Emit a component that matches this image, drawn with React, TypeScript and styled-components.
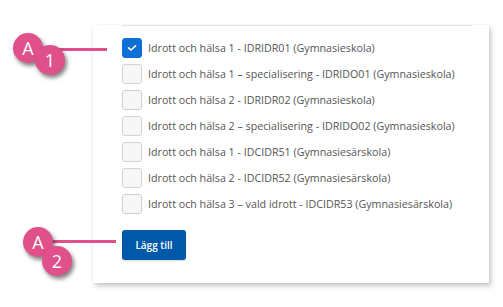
import React from "react";
import styled, { createGlobalStyle } from "styled-components";

const Global = createGlobalStyle`
  html, body { margin: 0; padding: 0; background: #ffffff; }
  body { font-family: "Open Sans", "Noto Sans", sans-serif; }
`;

const Stage = styled.div`
  position: relative;
  width: 503px;
  height: 307px;
  overflow: hidden;
  padding: 25px 0 0 93px;
  box-sizing: border-box;
`;

const Panel = styled.div`
  width: 396px;
  height: 258px;
  box-sizing: border-box;
  background: #fff;
  box-shadow: 2px 3px 5px rgba(0, 0, 0, 0.22), 0 0 2px rgba(0, 0, 0, 0.06);
  padding: 0 17px 23px 29px;
  display: flex;
  flex-direction: column;
`;

const TopRule = styled.div`
  height: 1px;
  background: #e6e6e6;
  margin-bottom: 12px;
`;

const List = styled.div`
  display: flex;
  flex-direction: column;
  gap: 6px;
`;

const Row = styled.label`
  display: flex;
  align-items: center;
  gap: 6px;
  height: 20px;
`;

const Box = styled.span<{ $checked?: boolean }>`
  width: 20px;
  height: 20px;
  box-sizing: border-box;
  border-radius: 3px;
  flex: none;
  display: flex;
  align-items: center;
  justify-content: center;
  background: ${(p) => (p.$checked ? "#0e6fd6" : "#f7f7f7")};
  border: 1px solid ${(p) => (p.$checked ? "#0e6fd6" : "#d2d2d2")};
`;

const Label = styled.span`
  font-size: 10.7px;
  color: #555;
  white-space: nowrap;
`;

const AddButton = styled.button`
  margin-top: 16px;
  width: 64px;
  height: 31px;
  border: none;
  border-radius: 3px;
  background: #0059a8;
  color: #fff;
  font-family: "Open Sans", sans-serif;
  font-size: 10px;
  font-weight: 600;
  padding: 0;
  box-shadow: 0 1px 2px rgba(0, 0, 0, 0.15);
`;

const Callout = styled.div<{ $top: number }>`
  position: absolute;
  left: 0;
  top: ${(p) => p.$top}px;
  width: 130px;
  height: 60px;
`;

const Line = styled.div<{ $left: number; $width: number; $top: number }>`
  position: absolute;
  left: ${(p) => p.$left}px;
  width: ${(p) => p.$width}px;
  top: ${(p) => p.$top}px;
  height: 3px;
  background: #e0508a;
`;

const Badge = styled.div<{ $x: number; $y: number }>`
  position: absolute;
  left: ${(p) => p.$x - 15}px;
  top: ${(p) => p.$y - 15}px;
  width: 30px;
  height: 30px;
  border-radius: 50%;
  background: #e0508a;
  color: #fff;
  font-family: "Open Sans", sans-serif;
  font-size: 18px;
  display: flex;
  align-items: center;
  justify-content: center;
  box-shadow: 2px 3px 4px rgba(0, 0, 0, 0.5);
`;

const items = [
  "Idrott och hälsa 1 - IDRIDR01 (Gymnasieskola)",
  "Idrott och hälsa 1 – specialisering - IDRIDO01 (Gymnasieskola)",
  "Idrott och hälsa 2 - IDRIDR02 (Gymnasieskola)",
  "Idrott och hälsa 2 – specialisering - IDRIDO02 (Gymnasieskola)",
  "Idrott och hälsa 1 - IDCIDR51 (Gymnasiesärskola)",
  "Idrott och hälsa 2 - IDCIDR52 (Gymnasiesärskola)",
  "Idrott och hälsa 3 – vald idrott - IDCIDR53 (Gymnasiesärskola)",
];

const Check = () => (
  <svg width="10" height="8" viewBox="0 0 10 8">
    <path d="M1.5 3.8 L4 6 L8.5 1.8" fill="none" stroke="#fff" strokeWidth="1.6" strokeLinecap="round" strokeLinejoin="round" />
  </svg>
);

export default function App() {
  return (
    <>
      <Global />
      <Stage>
        <Panel>
          <TopRule />
          <List>
            {items.map((t, i) => (
              <Row key={t}>
                <Box $checked={i === 0}>{i === 0 && <Check />}</Box>
                <Label>{t}</Label>
              </Row>
            ))}
          </List>
          <AddButton>Lägg till</AddButton>
        </Panel>
        <Callout $top={0}>
          <Line $left={40} $width={67} $top={48} />
          <Badge $x={28} $y={48}>A</Badge>
          <Badge $x={50} $y={60}>1</Badge>
        </Callout>
        <Callout $top={200}>
          <Line $left={48} $width={68} $top={40} />
          <Badge $x={38} $y={42}>A</Badge>
          <Badge $x={57} $y={61}>2</Badge>
        </Callout>
      </Stage>
    </>
  );
}
